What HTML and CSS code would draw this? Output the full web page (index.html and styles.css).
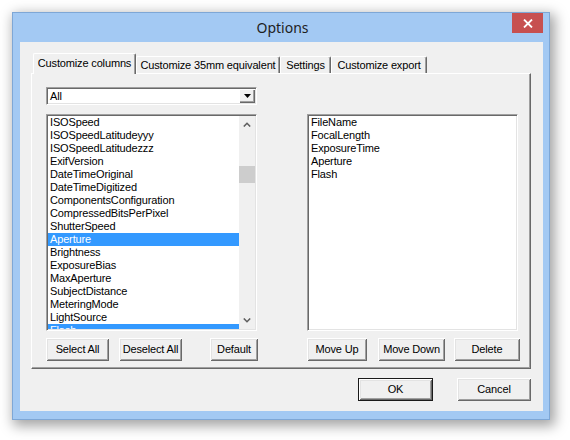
FILE: index.html
```html
<!DOCTYPE html>
<html>
<head>
<meta charset="utf-8">
<title>Options</title>
<link rel="stylesheet" href="styles.css">
</head>
<body>
<div class="window">
  <div class="titlebar">
    <span class="title">Options</span>
    <div class="close">
      <svg width="10" height="9" viewBox="0 0 10 9"><path d="M1 0.5 L9 8.5 M9 0.5 L1 8.5" stroke="#fff" stroke-width="1.8" fill="none"/></svg>
    </div>
  </div>
  <div class="client">
    <div class="tabs">
      <div class="tab active w1">Customize columns</div>
      <div class="tab w2">Customize 35mm equivalent</div>
      <div class="tab w3">Settings</div>
      <div class="tab w4">Customize export</div>
    </div>
    <div class="panel">
      <div class="grid">
        <div class="combo">
          <span class="combo-text">All</span>
          <div class="combo-btn">
            <svg width="7" height="4" viewBox="0 0 7 4"><path d="M0 0 H7 L3.5 4 Z" fill="#000"/></svg>
          </div>
        </div>
        <div class="spacer"></div>
        <div class="listbox">
          <div class="items">
            <div class="item">ISOSpeed</div>
            <div class="item">ISOSpeedLatitudeyyy</div>
            <div class="item">ISOSpeedLatitudezzz</div>
            <div class="item">ExifVersion</div>
            <div class="item">DateTimeOriginal</div>
            <div class="item">DateTimeDigitized</div>
            <div class="item">ComponentsConfiguration</div>
            <div class="item">CompressedBitsPerPixel</div>
            <div class="item">ShutterSpeed</div>
            <div class="item sel">Aperture</div>
            <div class="item">Brightness</div>
            <div class="item">ExposureBias</div>
            <div class="item">MaxAperture</div>
            <div class="item">SubjectDistance</div>
            <div class="item">MeteringMode</div>
            <div class="item">LightSource</div>
            <div class="item sel">Flash</div>
          </div>
          <div class="scrollbar">
            <div class="sb-btn">
              <svg width="8" height="5" viewBox="0 0 8 5"><path d="M0.8 4.5 L4 1.3 L7.2 4.5" stroke="#606060" stroke-width="1.6" fill="none"/></svg>
            </div>
            <div class="sb-track"><div class="sb-thumb"></div></div>
            <div class="sb-btn">
              <svg width="8" height="5" viewBox="0 0 8 5"><path d="M0.8 0.5 L4 3.7 L7.2 0.5" stroke="#606060" stroke-width="1.6" fill="none"/></svg>
            </div>
          </div>
        </div>
        <div class="listbox">
          <div class="items">
            <div class="item">FileName</div>
            <div class="item">FocalLength</div>
            <div class="item">ExposureTime</div>
            <div class="item">Aperture</div>
            <div class="item">Flash</div>
          </div>
        </div>
        <div class="btnrow">
          <div class="btn b-select">Select All</div>
          <div class="btn b-deselect">Deselect All</div>
          <div class="btn b-default">Default</div>
        </div>
        <div class="btnrow">
          <div class="btn b-up">Move Up</div>
          <div class="btn b-down">Move Down</div>
          <div class="btn b-delete">Delete</div>
        </div>
      </div>
    </div>
    <div class="dialog-buttons">
      <div class="btn default b-ok">OK</div>
      <div class="btn b-cancel">Cancel</div>
    </div>
  </div>
</div>
</body>
</html>
```

FILE: styles.css
```css
* { box-sizing: border-box; }
html, body { margin: 0; padding: 0; background: #ffffff; }
body {
  width: 570px;
  height: 440px;
  overflow: hidden;
  font-family: "Liberation Sans", Arial, sans-serif;
  font-size: 11px;
  letter-spacing: -0.15px;
  color: #000;
}
.window {
  margin: 12px 0 0 12px;
  width: 538px;
  height: 408px;
  border: 1px solid #7ea7d6;
  background: #a3c9f3;
  padding: 0 6px 8px 7px;
  display: flex;
  flex-direction: column;
  box-shadow: 3px 4px 12px 2px rgba(0,0,0,0.36);
}
.titlebar {
  height: 29px;
  display: grid;
  grid-template-columns: 1fr auto 1fr;
  align-items: start;
}
.title {
  grid-column: 2;
  font-family: "Noto Sans", "Open Sans", sans-serif;
  font-size: 14px;
  letter-spacing: 0;
  line-height: 30px;
  color: #1e1e1e;
  padding-left: 2px;
}
.close {
  grid-column: 3;
  justify-self: end;
  width: 31px;
  height: 20px;
  background: #c75050;
  display: flex;
  align-items: center;
  justify-content: center;
}
.client {
  flex: 1;
  background: #f0f0f0;
  padding: 11px 12px 0 11px;
  display: flex;
  flex-direction: column;
}
.tabs {
  display: flex;
  align-items: flex-end;
  height: 21px;
  margin-left: 2px;
  position: relative;
  z-index: 1;
  margin-bottom: -1px;
}
.tab {
  height: 17px;
  margin-bottom: 1px;
  line-height: 16px;
  text-align: center;
  white-space: nowrap;
  background: #f0f0f0;
  border-top: 1px solid #ffffff;
  border-left: 1px solid #ffffff;
  border-right: 1px solid #696969;
  box-shadow: inset -1px 0 #a0a0a0;
  border-radius: 2px 2px 0 0;
}
.tab.active {
  height: 21px;
  margin-bottom: 0;
  line-height: 19px;
  padding-bottom: 2px;
}
.w1 { width: 103px; }
.w2 { width: 144px; }
.w3 { width: 51px; }
.w4 { width: 96px; }
.panel {
  width: 500px;
  height: 296px;
  border: 1px solid;
  border-color: #ffffff #696969 #696969 #ffffff;
  box-shadow: inset -1px -1px #a0a0a0;
  padding: 13px 0 0 14px;
}
.grid {
  display: grid;
  grid-template-columns: 211px 211px;
  grid-template-rows: 18px 217px 23px;
  column-gap: 50px;
  row-gap: 9px;
}
.combo {
  display: flex;
  align-items: stretch;
  background: #fff;
  border: 1px solid;
  border-color: #a0a0a0 #ffffff #ffffff #a0a0a0;
  box-shadow: inset 1px 1px #696969, inset -1px -1px #e3e3e3;
  padding: 1px;
}
.combo-text {
  flex: 1;
  line-height: 14px;
  padding-left: 2px;
}
.combo-btn {
  width: 16px;
  background: #f0f0f0;
  box-shadow: inset 1px 1px #ffffff, inset -1px -1px #696969, inset -2px -2px #a0a0a0;
  display: flex;
  align-items: center;
  justify-content: center;
}
.listbox {
  display: flex;
  background: #fff;
  border: 1px solid;
  border-color: #a0a0a0 #ffffff #ffffff #a0a0a0;
  box-shadow: inset 1px 1px #696969, inset -1px -1px #e3e3e3;
  padding: 1px;
  overflow: hidden;
}
.items {
  flex: 1;
  overflow: hidden;
}
.item {
  height: 13px;
  line-height: 13px;
  padding-left: 2px;
  white-space: nowrap;
}
.item.sel {
  background: #3399ff;
  color: #fff;
}
.scrollbar {
  width: 16px;
  background: #f0f0f0;
  display: flex;
  flex-direction: column;
}
.sb-btn {
  height: 17px;
  display: flex;
  align-items: center;
  justify-content: center;
}
.sb-track { flex: 1; }
.sb-thumb {
  margin-top: 33px;
  height: 17px;
  background: #cdcdcd;
}
.btnrow {
  display: flex;
  margin-top: -2px;
}
.btn {
  height: 23px;
  line-height: 23px;
  text-align: center;
  background: #f0f0f0;
  white-space: nowrap;
  flex: none;
  box-shadow: inset 1px 1px #ffffff, inset -1px -1px #696969, inset 2px 2px #e3e3e3, inset -2px -2px #a0a0a0;
}
.btn.default {
  border: 1px solid #1a1a1a;
  line-height: 21px;
}
.b-select { width: 63px; }
.b-deselect { width: 63px; margin-left: 10px; }
.b-default { width: 48px; margin-left: auto; margin-right: -1px; }
.b-up { width: 60px; }
.b-down { width: 67px; margin-left: 11px; }
.b-delete { width: 66px; margin-left: 9px; }
.dialog-buttons {
  display: flex;
  justify-content: flex-end;
  margin-top: 9px;
  width: 500px;
}
.b-ok { width: 75px; }
.b-cancel { width: 74px; margin-left: 24px; }
```
